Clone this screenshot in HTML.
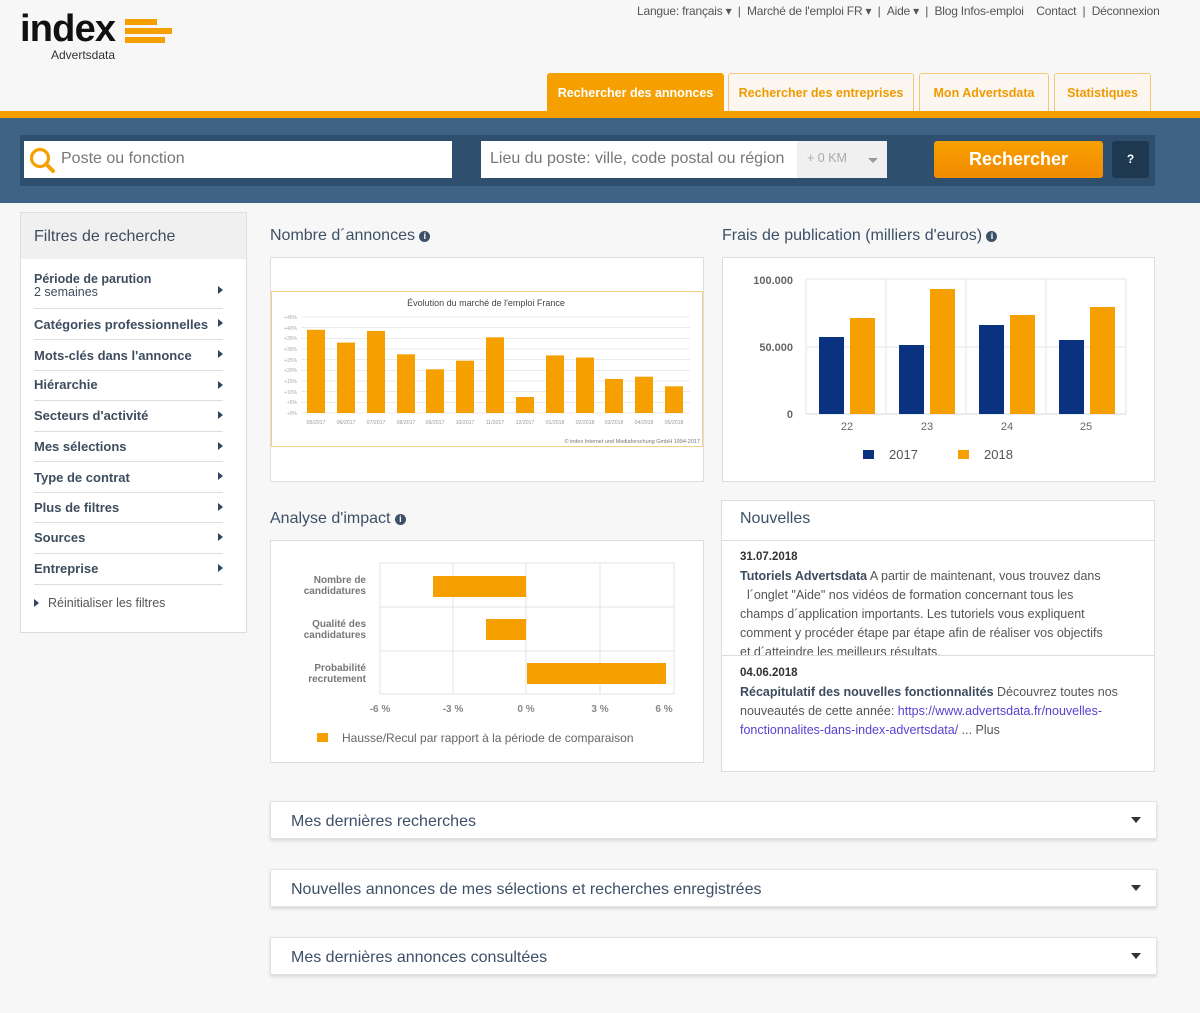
<!DOCTYPE html>
<html><head><meta charset="utf-8"><style>
*{margin:0;padding:0;box-sizing:border-box}
body{width:1200px;height:1013px;background:#f7f7f7;font-family:"Liberation Sans",sans-serif;position:relative;overflow:hidden;color:#3d4d5f}
.a{position:absolute}
.top{top:4px;left:637px;font-size:12px;color:#555;white-space:nowrap;letter-spacing:-0.2px}
.tab{position:absolute;top:73px;height:38px;border:1px solid #f6c77a;border-bottom:none;background:#fbf7f0;color:#f09a00;font-size:12.5px;font-weight:bold;text-align:center;line-height:38px;border-radius:3px 3px 0 0}
.side{left:20px;top:212px;width:227px;height:421px;background:#fff;border:1px solid #ddd}
.side .h{height:46px;background:#f0f0f0;font-size:16px;padding:15px 0 0 13px;color:#3d4d5f}
.it{position:absolute;left:13px;width:189px;border-bottom:1px solid #ddd;font-size:13px;font-weight:bold;color:#3d4d5f}
.it:after{content:"";position:absolute;right:0;top:50%;margin-top:-5px;border-left:5px solid #2f4560;border-top:4px solid transparent;border-bottom:4px solid transparent}
.tt{font-size:16px;color:#3d5068}
.i{display:inline-block;width:11px;height:11px;border-radius:50%;background:#3d5068;color:#fff;font-size:9px;text-align:center;line-height:11px;font-weight:bold;vertical-align:1px}
.box{background:#fff;border:1px solid #ddd}
.acc{position:absolute;left:270px;width:887px;height:38px;background:#fff;border:1px solid #e2e2e2;box-shadow:0 2px 3px rgba(0,0,0,.12);font-size:16px;color:#3d5068;padding:11px 0 0 20px}
.acc:after{content:"";position:absolute;right:15px;top:15px;border-top:6px solid #333;border-left:5px solid transparent;border-right:5px solid transparent}
.nw{white-space:nowrap;font-size:12.5px;line-height:19px;color:#555}
</style></head><body>
<div class="a" style="left:20px;top:8px;font-size:38px;font-weight:bold;color:#111;letter-spacing:-0.8px">index</div>
<div class="a" style="left:125px;top:19px;width:32px;height:6px;background:#f5a000"></div>
<div class="a" style="left:125px;top:28px;width:47px;height:6px;background:#f5a000"></div>
<div class="a" style="left:125px;top:37px;width:40px;height:6px;background:#f5a000"></div>
<div class="a" style="left:51px;top:48px;font-size:12px;color:#333">Advertsdata</div>
<div class="a top">Langue: français ▾ &nbsp;| &nbsp;Marché de l'emploi FR ▾ &nbsp;| &nbsp;Aide ▾ &nbsp;| &nbsp;Blog Infos-emploi &nbsp;&nbsp; Contact &nbsp;| &nbsp;Déconnexion</div>
<div class="tab" style="left:547px;width:177px;background:#f5a000;color:#fff;border-color:#f5a000">Rechercher des annonces</div>
<div class="tab" style="left:728px;width:186px">Rechercher des entreprises</div>
<div class="tab" style="left:919px;width:130px">Mon Advertsdata</div>
<div class="tab" style="left:1054px;width:97px">Statistiques</div>
<div class="a" style="left:0;top:111px;width:1200px;height:7px;background:#f5a000"></div>
<div class="a" style="left:0;top:118px;width:1200px;height:85px;background:#3f6384"></div>
<div class="a" style="left:20px;top:135px;width:1135px;height:51px;background:#2e4f6d"></div>
<div class="a" style="left:24px;top:141px;width:428px;height:37px;background:#fff"></div>
<svg class="a" style="left:28px;top:146px" width="30" height="30"><circle cx="12" cy="12" r="8.5" fill="none" stroke="#f5a000" stroke-width="3.2"/><line x1="18" y1="18" x2="25" y2="25" stroke="#f5a000" stroke-width="4" stroke-linecap="round"/></svg>
<div class="a" style="left:61px;top:150px;font-size:16px;color:#777">Poste ou fonction</div>
<div class="a" style="left:481px;top:141px;width:316px;height:37px;background:#fff"></div>
<div class="a" style="left:490px;top:150px;font-size:16px;color:#777">Lieu du poste: ville, code postal ou région</div>
<div class="a" style="left:797px;top:141px;width:90px;height:37px;background:#f0f0f0"></div>
<div class="a" style="left:807px;top:151px;font-size:12.5px;color:#aaa">+ 0 KM</div>
<div class="a" style="left:868px;top:158px;border-top:5px solid #999;border-left:5px solid transparent;border-right:5px solid transparent"></div>
<div class="a" style="left:934px;top:141px;width:169px;height:37px;background:linear-gradient(#f6a000,#f28a00);border-radius:3px;color:#fff;font-size:18px;font-weight:bold;text-align:center;line-height:37px">Rechercher</div>
<div class="a" style="left:1112px;top:141px;width:37px;height:37px;background:#1e3850;border-radius:3px;color:#fff;font-size:12px;font-weight:bold;text-align:center;line-height:37px">?</div>

<div class="a side"><div class="h">Filtres de recherche</div>
<div class="it" style="top:60px;height:36px;font-size:12.5px;line-height:13px">Période de parution<br><span style="font-weight:normal">2 semaines</span></div>
<div class="it" style="top:96px;height:31px;padding-top:8px">Catégories professionnelles</div>
<div class="it" style="top:127px;height:31px;padding-top:8px">Mots-clés dans l'annonce</div>
<div class="it" style="top:158px;height:30px;padding-top:6px">Hiérarchie</div>
<div class="it" style="top:188px;height:31px;padding-top:7px">Secteurs d'activité</div>
<div class="it" style="top:219px;height:30px;padding-top:7px">Mes sélections</div>
<div class="it" style="top:249px;height:31px;padding-top:8px">Type de contrat</div>
<div class="it" style="top:280px;height:30px;padding-top:7px">Plus de filtres</div>
<div class="it" style="top:310px;height:31px;padding-top:7px">Sources</div>
<div class="it" style="top:341px;height:31px;padding-top:7px">Entreprise</div>
<div class="a" style="left:13px;top:383px;font-size:12.5px;color:#555"><span style="display:inline-block;border-left:5px solid #2f4560;border-top:4px solid transparent;border-bottom:4px solid transparent;margin-right:9px"></span>Réinitialiser les filtres</div>
</div>

<div class="a tt" style="left:270px;top:227px">Nombre d´annonces <span class="i">i</span></div>
<div class="a box" style="left:270px;top:257px;width:434px;height:225px"></div>
<svg class="a" style="left:271px;top:291px" width="432" height="156" font-family="Liberation Sans">
<rect x="0.5" y="0.5" width="431" height="155" fill="#fff" stroke="#f6d08a"/>
<text x="215" y="15" font-size="9" text-anchor="middle" fill="#444">Évolution du marché de l'emploi France</text>
<g stroke="#ddd" stroke-width="0.6">
<line x1="30" y1="26" x2="419" y2="26"/><line x1="30" y1="36.7" x2="419" y2="36.7"/><line x1="30" y1="47.3" x2="419" y2="47.3"/><line x1="30" y1="58" x2="419" y2="58"/><line x1="30" y1="68.7" x2="419" y2="68.7"/><line x1="30" y1="79.3" x2="419" y2="79.3"/><line x1="30" y1="90" x2="419" y2="90"/><line x1="30" y1="100.7" x2="419" y2="100.7"/><line x1="30" y1="111.3" x2="419" y2="111.3"/><line x1="30" y1="122" x2="419" y2="122"/>
</g>
<g fill="#aaa" font-size="5" text-anchor="end"><text x="26" y="28">+45%</text><text x="26" y="39">+40%</text><text x="26" y="49">+35%</text><text x="26" y="60">+30%</text><text x="26" y="71">+25%</text><text x="26" y="81">+20%</text><text x="26" y="92">+15%</text><text x="26" y="103">+10%</text><text x="26" y="113">+5%</text><text x="26" y="124">+0%</text></g>
<g fill="#f5a000">
<rect x="36" y="38.8" width="18" height="83.2"/><rect x="66" y="51.6" width="18" height="70.4"/><rect x="96" y="39.9" width="18" height="82.1"/><rect x="126" y="63.3" width="18" height="58.7"/><rect x="155" y="78.3" width="18" height="43.7"/><rect x="185" y="69.7" width="18" height="52.3"/><rect x="215" y="46.3" width="18" height="75.7"/><rect x="245" y="106" width="18" height="16"/><rect x="275" y="64.4" width="18" height="57.6"/><rect x="305" y="66.5" width="18" height="55.5"/><rect x="334" y="87.9" width="18" height="34.1"/><rect x="364" y="85.7" width="18" height="36.3"/><rect x="394" y="95.3" width="18" height="26.7"/>
</g>
<g fill="#999" font-size="5.2" text-anchor="middle"><text x="45" y="133">05/2017</text><text x="75" y="133">06/2017</text><text x="105" y="133">07/2017</text><text x="135" y="133">08/2017</text><text x="164" y="133">09/2017</text><text x="194" y="133">10/2017</text><text x="224" y="133">11/2017</text><text x="254" y="133">12/2017</text><text x="284" y="133">01/2018</text><text x="314" y="133">02/2018</text><text x="343" y="133">03/2018</text><text x="373" y="133">04/2018</text><text x="403" y="133">05/2018</text></g>
<text x="429" y="152" font-size="5.5" text-anchor="end" fill="#777">© index Internet und Mediaforschung GmbH 1994-2017</text>
</svg>

<div class="a tt" style="left:722px;top:227px">Frais de publication (milliers d'euros) <span class="i">i</span></div>
<div class="a box" style="left:722px;top:257px;width:433px;height:225px"></div>
<svg class="a" style="left:722px;top:257px" width="433" height="225" font-family="Liberation Sans">
<g stroke="#e6e6e6"><line x1="84" y1="22" x2="404" y2="22"/><line x1="84" y1="90" x2="404" y2="90"/><line x1="84" y1="22" x2="84" y2="157"/><line x1="164" y1="22" x2="164" y2="157"/><line x1="244" y1="22" x2="244" y2="157"/><line x1="324" y1="22" x2="324" y2="157"/><line x1="404" y1="22" x2="404" y2="157"/></g>
<line x1="84" y1="157" x2="404" y2="157" stroke="#cdd8e2"/>
<g fill="#666" font-size="11" font-weight="bold" text-anchor="end"><text x="71" y="27">100.000</text><text x="71" y="94">50.000</text><text x="71" y="161">0</text></g>
<g fill="#0a3280"><rect x="97" y="80" width="25" height="77"/><rect x="177" y="88" width="25" height="69"/><rect x="257" y="68" width="25" height="89"/><rect x="337" y="83" width="25" height="74"/></g>
<g fill="#f5a000"><rect x="128" y="61" width="25" height="96"/><rect x="208" y="32" width="25" height="125"/><rect x="288" y="58" width="25" height="99"/><rect x="368" y="50" width="25" height="107"/></g>
<g fill="#666" font-size="11" text-anchor="middle"><text x="125" y="173">22</text><text x="205" y="173">23</text><text x="285" y="173">24</text><text x="364" y="173">25</text></g>
<rect x="141" y="193" width="11" height="9" fill="#0a3280"/><text x="167" y="202" font-size="13" fill="#555">2017</text>
<rect x="236" y="193" width="11" height="9" fill="#f5a000"/><text x="262" y="202" font-size="13" fill="#555">2018</text>
</svg>

<div class="a tt" style="left:270px;top:510px">Analyse d'impact <span class="i">i</span></div>
<div class="a box" style="left:270px;top:540px;width:434px;height:223px"></div>
<svg class="a" style="left:270px;top:540px" width="434" height="223" font-family="Liberation Sans">
<g stroke="#e3e3e3"><rect x="110" y="23" width="294" height="131" fill="none"/><line x1="110" y1="67" x2="404" y2="67"/><line x1="110" y1="111" x2="404" y2="111"/><line x1="183" y1="23" x2="183" y2="154"/><line x1="256" y1="23" x2="256" y2="154"/><line x1="330" y1="23" x2="330" y2="154"/></g>
<g fill="#f5a000"><rect x="163" y="36" width="93" height="21"/><rect x="216" y="79" width="40" height="21"/><rect x="257" y="123" width="139" height="21"/></g>
<g fill="#777" font-size="10" font-weight="bold" text-anchor="end"><text x="96" y="43">Nombre de</text><text x="96" y="54">candidatures</text><text x="96" y="87">Qualité des</text><text x="96" y="98">candidatures</text><text x="96" y="131">Probabilité</text><text x="96" y="142">recrutement</text></g>
<g fill="#888" font-size="10" font-weight="bold" text-anchor="middle"><text x="110" y="172">-6 %</text><text x="183" y="172">-3 %</text><text x="256" y="172">0 %</text><text x="330" y="172">3 %</text><text x="394" y="172">6 %</text></g>
<rect x="47" y="193" width="11" height="9" fill="#f5a000"/><text x="72" y="202" font-size="12" fill="#666">Hausse/Recul par rapport à la période de comparaison</text>
</svg>

<div class="a box" style="left:721px;top:500px;width:434px;height:272px"></div>
<div class="a" style="left:721px;top:540px;width:434px;height:1px;background:#ddd"></div>
<div class="a" style="left:740px;top:510px;font-size:16px;color:#3d5068">Nouvelles</div>
<div class="a" style="left:722px;top:541px;width:432px;height:114px;overflow:hidden">
<div class="a nw" style="left:18px;top:7px">
<div style="font-weight:bold;color:#333;font-size:11.5px">31.07.2018</div>
<b style="color:#3d4d5f">Tutoriels Advertsdata</b> A partir de maintenant, vous trouvez dans<br>&nbsp; l´onglet "Aide" nos vidéos de formation concernant tous les<br>champs d´application importants. Les tutoriels vous expliquent<br>comment y procéder étape par étape afin de réaliser vos objectifs<br>et d´atteindre les meilleurs résultats.</div></div>
<div class="a" style="left:721px;top:655px;width:434px;height:1px;background:#ddd"></div>
<div class="a nw" style="left:740px;top:664px">
<div style="font-weight:bold;color:#333;font-size:11.5px">04.06.2018</div>
<b style="color:#3d4d5f">Récapitulatif des nouvelles fonctionnalités</b> Découvrez toutes nos<br>nouveautés de cette année: <span style="color:#5b3fd0">https://www.advertsdata.fr/nouvelles-<br>fonctionnalites-dans-index-advertsdata/</span> ... Plus</div>

<div class="acc" style="top:801px">Mes dernières recherches</div>
<div class="acc" style="top:869px">Nouvelles annonces de mes sélections et recherches enregistrées</div>
<div class="acc" style="top:937px">Mes dernières annonces consultées</div>
</body></html>
